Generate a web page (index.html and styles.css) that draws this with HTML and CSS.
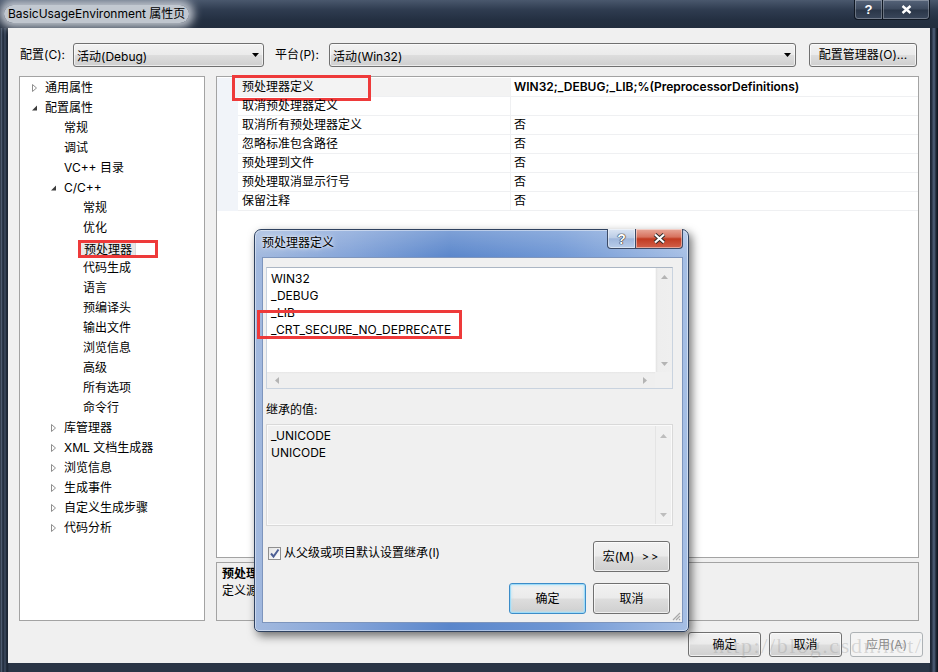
FILE: index.html
```html
<!DOCTYPE html>
<html lang="zh-CN">
<head>
<meta charset="utf-8">
<title>BasicUsageEnvironment 属性页</title>
<link rel="stylesheet" href="styles.css">
</head>
<body>
<div class="win">
  <div class="win-title">
    <span class="win-caption">BasicUsageEnvironment 属性页</span>
    <div class="win-btns">
      <span class="wbtn wbtn-help">?</span>
      <span class="wbtn wbtn-close"><svg width="11" height="9" viewBox="0 0 11 9"><path d="M1.5 1 L9.5 8 M9.5 1 L1.5 8" stroke="#fff" stroke-width="2.4" fill="none"/></svg></span>
    </div>
  </div>
  <div class="client">
    <div class="toprow">
      <span class="lbl lbl-cfg">配置(C):</span>
      <div class="combo combo-cfg"><span>活动(Debug)</span><svg class="drop" width="7" height="4" viewBox="0 0 7 4"><path d="M0 0H7L3.5 4Z" fill="#000"/></svg></div>
      <span class="lbl lbl-plat">平台(P):</span>
      <div class="combo combo-plat"><span>活动(Win32)</span><svg class="drop" width="7" height="4" viewBox="0 0 7 4"><path d="M0 0H7L3.5 4Z" fill="#000"/></svg></div>
      <div class="btn btn-mgr">配置管理器(O)...</div>
    </div>
    <div class="mainrow">
      <div class="tree">
        <div class="ti l0"><span class="tw"><svg width="7" height="10" viewBox="0 0 7 10"><path d="M1.5 1.5 L5.5 5 L1.5 8.5 Z" fill="#fff" stroke="#8e8e8e"/></svg></span>通用属性</div>
        <div class="ti l0"><span class="tw"><svg width="7" height="10" viewBox="0 0 7 10"><path d="M6 2.5 V7.5 H1 Z" fill="#3c3c3c"/></svg></span>配置属性</div>
        <div class="ti l1"><span class="tw"></span>常规</div>
        <div class="ti l1"><span class="tw"></span>调试</div>
        <div class="ti l1"><span class="tw"></span>VC++ 目录</div>
        <div class="ti l1"><span class="tw"><svg width="7" height="10" viewBox="0 0 7 10"><path d="M6 2.5 V7.5 H1 Z" fill="#3c3c3c"/></svg></span>C/C++</div>
        <div class="ti l2"><span class="tw"></span>常规</div>
        <div class="ti l2"><span class="tw"></span>优化</div>
        <div class="ti l2"><span class="tw"></span><span class="sel">预处理器<span class="redbox redbox-tree"></span></span></div>
        <div class="ti l2"><span class="tw"></span>代码生成</div>
        <div class="ti l2"><span class="tw"></span>语言</div>
        <div class="ti l2"><span class="tw"></span>预编译头</div>
        <div class="ti l2"><span class="tw"></span>输出文件</div>
        <div class="ti l2"><span class="tw"></span>浏览信息</div>
        <div class="ti l2"><span class="tw"></span>高级</div>
        <div class="ti l2"><span class="tw"></span>所有选项</div>
        <div class="ti l2"><span class="tw"></span>命令行</div>
        <div class="ti l1"><span class="tw"><svg width="7" height="10" viewBox="0 0 7 10"><path d="M1.5 1.5 L5.5 5 L1.5 8.5 Z" fill="#fff" stroke="#8e8e8e"/></svg></span>库管理器</div>
        <div class="ti l1"><span class="tw"><svg width="7" height="10" viewBox="0 0 7 10"><path d="M1.5 1.5 L5.5 5 L1.5 8.5 Z" fill="#fff" stroke="#8e8e8e"/></svg></span>XML 文档生成器</div>
        <div class="ti l1"><span class="tw"><svg width="7" height="10" viewBox="0 0 7 10"><path d="M1.5 1.5 L5.5 5 L1.5 8.5 Z" fill="#fff" stroke="#8e8e8e"/></svg></span>浏览信息</div>
        <div class="ti l1"><span class="tw"><svg width="7" height="10" viewBox="0 0 7 10"><path d="M1.5 1.5 L5.5 5 L1.5 8.5 Z" fill="#fff" stroke="#8e8e8e"/></svg></span>生成事件</div>
        <div class="ti l1"><span class="tw"><svg width="7" height="10" viewBox="0 0 7 10"><path d="M1.5 1.5 L5.5 5 L1.5 8.5 Z" fill="#fff" stroke="#8e8e8e"/></svg></span>自定义生成步骤</div>
        <div class="ti l1"><span class="tw"><svg width="7" height="10" viewBox="0 0 7 10"><path d="M1.5 1.5 L5.5 5 L1.5 8.5 Z" fill="#fff" stroke="#8e8e8e"/></svg></span>代码分析</div>
      </div>
      <div class="rightcol">
        <div class="grid">
          <div class="row row-sel"><div class="gut"></div><div class="name">预处理器定义<span class="redbox redbox-grid"></span></div><div class="val bold">WIN32;_DEBUG;_LIB;%(PreprocessorDefinitions)</div></div>
          <div class="row"><div class="gut"></div><div class="name">取消预处理器定义</div><div class="val"></div></div>
          <div class="row"><div class="gut"></div><div class="name">取消所有预处理器定义</div><div class="val">否</div></div>
          <div class="row"><div class="gut"></div><div class="name">忽略标准包含路径</div><div class="val">否</div></div>
          <div class="row"><div class="gut"></div><div class="name">预处理到文件</div><div class="val">否</div></div>
          <div class="row"><div class="gut"></div><div class="name">预处理取消显示行号</div><div class="val">否</div></div>
          <div class="row"><div class="gut"></div><div class="name">保留注释</div><div class="val">否</div></div>
        </div>
        <div class="desc">
          <div class="desc-title">预处理器定义</div>
          <div class="desc-text">定义源文件的预处理符号。</div>
        </div>
      </div>
    </div>
    <div class="btnrow">
      <div class="btn wbtn-ok">确定</div>
      <div class="btn wbtn-ok">取消</div>
      <div class="btn wbtn-ok disabled">应用(A)</div>
    </div>
  </div>
</div>

<div class="dlg">
  <div class="dlg-title">
    <span class="dlg-caption">预处理器定义</span>
    <div class="dlg-btns">
      <span class="dbtn dbtn-help">?</span>
      <span class="dbtn dbtn-close"><svg width="13" height="11" viewBox="0 0 13 11"><path d="M2 1.5 L11 9.5 M11 1.5 L2 9.5" stroke="#2b2b2b" stroke-width="4" fill="none"/><path d="M2 1.5 L11 9.5 M11 1.5 L2 9.5" stroke="#fff" stroke-width="2.2" fill="none"/></svg></span>
    </div>
  </div>
  <div class="dlg-client">
    <div class="edit">
      <div class="edit-text">
        <div>WIN32</div>
        <div>_DEBUG</div>
        <div>_LIB</div>
        <div class="crt">_CRT_SECURE_NO_DEPRECATE<span class="redbox redbox-crt"></span></div>
      </div>
      <div class="vscroll">
        <svg width="7" height="4" viewBox="0 0 7 4"><path d="M0 4L3.5 0L7 4Z" fill="#b4b4b4"/></svg>
        <svg width="7" height="4" viewBox="0 0 7 4"><path d="M0 0H7L3.5 4Z" fill="#b4b4b4"/></svg>
      </div>
      <div class="hscroll">
        <svg width="4" height="7" viewBox="0 0 4 7"><path d="M4 0V7L0 3.5Z" fill="#b4b4b4"/></svg>
        <svg width="4" height="7" viewBox="0 0 4 7"><path d="M0 0V7L4 3.5Z" fill="#b4b4b4"/></svg>
      </div>
      <div class="corner"></div>
    </div>
    <div class="inh-label">继承的值:</div>
    <div class="inh">
      <div class="inh-text">
        <div>_UNICODE</div>
        <div>UNICODE</div>
      </div>
      <div class="vscroll vscroll-dis">
        <svg width="7" height="4" viewBox="0 0 7 4"><path d="M0 4L3.5 0L7 4Z" fill="#bdbdbd"/></svg>
        <svg width="7" height="4" viewBox="0 0 7 4"><path d="M0 0H7L3.5 4Z" fill="#bdbdbd"/></svg>
      </div>
    </div>
    <div class="dlg-row1">
      <label class="chk"><span class="chkbox"><svg width="11" height="11" viewBox="0 0 11 11"><path d="M2 5.5 L4.5 8.5 L9.5 1.5" stroke="#4d5f95" stroke-width="2" fill="none"/></svg></span>从父级或项目默认设置继承(I)</label>
      <div class="btn dbtn-std">宏(M)&nbsp;<span class="gtgt">&gt;&gt;</span></div>
    </div>
    <div class="dlg-row2">
      <div class="btn dbtn-std focus">确定</div>
      <div class="btn dbtn-std">取消</div>
    </div>
    <span class="grip"><svg width="10" height="10" viewBox="0 0 10 10"><path d="M9 2 L2 9 M9 5 L5 9 M9 8 L8 9" stroke="#a8a8a8" stroke-width="1.2"/></svg></span>
  </div>
</div>

<div class="watermark">http://blog.csdn.net/</div>
</body>
</html>
```

FILE: styles.css
```css
* { box-sizing: border-box; }
html, body { margin: 0; padding: 0; }
body {
  width: 938px; height: 672px; overflow: hidden; position: relative;
  background: #1b2433;
  font-family: "Inter", "Noto Sans CJK SC", sans-serif;
  font-size: 12px; color: #000;
}

/* ---------- main window ---------- */
.win {
  width: 938px; height: 672px;
  display: flex; flex-direction: column;
  background: linear-gradient(90deg, #0c121b 0, #5d6c82 1px, #1c2636 3px, #3f4d62 5px, #17202d 7px, #2a3546 9px, #2a3546 calc(100% - 9px), #1a2332 calc(100% - 7px), #51607a calc(100% - 4px), #202a3a calc(100% - 2px), #0c121b 100%);
}
.win-title {
  height: 28px; flex: none;
  display: flex; align-items: flex-start;
  padding-left: 8px;
  background: linear-gradient(180deg, #4a586d 0%, #2f3c50 35%, #243042 70%, #222d3e 100%);
}
.win-caption {
  margin-top: 5px;
  padding: 0 4px;
  margin-left: -4px;
  line-height: 18px;
  color: #000;
  background: rgba(210, 215, 222, 0.9);
  border-radius: 9px;
  box-shadow: 0 0 8px 5px rgba(210, 215, 222, 0.85);
}
.win-btns { margin-left: auto; margin-right: 8px; display: flex; }
.wbtn {
  height: 20px; display: flex; align-items: center; justify-content: center;
  color: #fff; font-weight: bold; font-size: 13px; font-family: "Liberation Sans", sans-serif;
  border: 1px solid #0f1722; border-top: none;
  background: linear-gradient(180deg, #56647a 0%, #3c495d 48%, #2a3648 52%, #3a475b 100%);
  box-shadow: inset 0 0 0 1px rgba(255,255,255,0.28);
}
.wbtn-help { width: 29px; border-radius: 0 0 0 4px; }
.wbtn-close { width: 47px; border-radius: 0 0 4px 0; border-left: none; }

.client {
  flex: 1;
  margin: 0 8px 9px 8px;
  background: #f0f0f0;
  padding: 15px 11px 0 11px;
  display: flex; flex-direction: column;
}
.toprow { height: 24px; display: flex; align-items: center; flex: none; }
.lbl { line-height: 16px; }
.lbl-cfg { width: 54px; padding-left: 1px; }
.lbl-plat { width: 54px; margin-left: 11px; }
.combo {
  height: 24px; display: flex; align-items: center; justify-content: space-between;
  padding: 0 4px 0 3px;
  border: 1px solid #707070; border-radius: 3px;
  background: linear-gradient(180deg, #f2f2f2 0%, #ebebeb 48%, #dddddd 52%, #cfcfcf 100%);
  box-shadow: inset 0 0 0 1px rgba(255,255,255,0.6);
}
.combo-cfg { width: 191px; }
.combo-plat { width: 467px; }
.btn {
  display: flex; align-items: center; justify-content: center;
  border: 1px solid #707070; border-radius: 3px;
  background: linear-gradient(180deg, #f2f2f2 0%, #ebebeb 48%, #dddddd 52%, #cfcfcf 100%);
  box-shadow: inset 0 0 0 1px rgba(255,255,255,0.65);
  line-height: 16px; white-space: nowrap;
}
.btn-mgr { width: 108px; height: 24px; margin-left: 13px; }

.mainrow { height: 545px; margin-top: 9px; display: flex; gap: 11px; flex: none; }
.tree {
  width: 186px; height: 545px;
  background: #fff; border: 1px solid #a3a3a3;
  padding-top: 1px;
}
.ti { height: 20px; line-height: 20px; display: flex; align-items: center; white-space: nowrap; }
.ti.l0 { padding-left: 10px; }
.ti.l1 { padding-left: 29px; }
.ti.l2 { padding-left: 48px; }
.tw { width: 15px; flex: none; display: flex; align-items: center; padding-left: 1px; }
.tw svg { display: block; }
.sel {
  position: relative; display: inline-block;
  margin-left: -4px; padding: 0 3px 0 4px;
  line-height: 17px; height: 17px;
  background: #e8e8e8; border: 1px solid #dadada; border-radius: 2px;
}
.redbox { position: absolute; border: 3px solid #ee3a3a; pointer-events: none; }
.redbox-tree { left: -2px; top: -1px; width: 80px; height: 18px; }

.rightcol { width: 703px; display: flex; flex-direction: column; gap: 4px; }
.grid {
  height: 482px; background: #fff; border: 1px solid #a3a3a3;
  padding-top: 1px;
}
.row { display: grid; grid-template-columns: 21px 273px 1fr; height: 19px; }
.gut { background: #f1f4f9; }
.name {
  position: relative;
  padding-left: 4px; line-height: 18px;
  border-bottom: 1px solid #eff0f2; border-right: 1px solid #eff0f2;
  white-space: nowrap;
}
.row-sel .name { background: #f3f3f3; }
.val { padding-left: 3px; line-height: 18px; border-bottom: 1px solid #eff0f2; white-space: nowrap; }
.bold { font-weight: 600; }
.redbox-grid { left: -6px; top: -3px; width: 139px; height: 26px; }

.desc {
  height: 59px; border: 1px solid #a3a3a3; background: #f0f0f0;
  padding: 2px 0 0 5px;
}
.desc-title { font-weight: bold; line-height: 17px; }
.desc-text { line-height: 17px; }

.btnrow { display: flex; justify-content: flex-end; gap: 8px; margin-top: 11px; margin-right: -4px; flex: none; }
.wbtn-ok { width: 73px; height: 25px; }
.btn.disabled {
  color: #8a8a8a; border-color: #adb2b5;
  background: #f4f4f4; box-shadow: none;
}

/* ---------- dialog ---------- */
.dlg {
  position: absolute; left: 254px; top: 229px;
  width: 435px; height: 403px;
  border: 1px solid #2f4260; border-radius: 7px 7px 5px 5px;
  background:
    linear-gradient(180deg, rgba(255,255,255,0.22) 0, rgba(255,255,255,0) 28px),
    linear-gradient(90deg, #a2b9de 0%, #83a3d8 22%, #5a86cb 45%, #6e96d4 70%, #a6bfe5 100%);
  box-shadow: 3px 4px 10px rgba(0,0,0,0.55), inset 0 0 0 1px rgba(255,255,255,0.45);
  padding: 0 5px 8px 7px;
  display: flex; flex-direction: column;
}
.dlg-title { height: 27px; flex: none; display: flex; align-items: flex-start; }
.dlg-caption { margin-top: 5px; line-height: 16px; color: #000; text-shadow: 0 0 6px rgba(255,255,255,0.9), 0 0 3px rgba(255,255,255,0.9); }
.dlg-btns { margin-left: auto; margin-top: -1px; display: flex; }
.dbtn {
  height: 20px; display: flex; align-items: center; justify-content: center;
  border: 1px solid #3b4a66; border-top: none;
  box-shadow: inset 0 0 0 1px rgba(255,255,255,0.45);
}
.dbtn-help {
  width: 29px; border-radius: 0 0 0 4px;
  background: linear-gradient(180deg, #dbe5f3 0%, #bccde6 45%, #9fb7dc 52%, #b9cdea 100%);
  color: #fff; font-weight: bold; font-size: 14px; font-family: "Liberation Sans", sans-serif;
  text-shadow: 0 0 1px #222, 0 0 1px #222, 0 0 1px #222;
}
.dbtn-close {
  width: 47px; border-radius: 0 0 4px 0; border-left: none;
  background: linear-gradient(180deg, #e8a899 0%, #d7725e 42%, #c13b21 52%, #d2614a 100%);
}
.dlg-client {
  flex: 1; position: relative;
  background: #f0f0f0;
  border: 1px solid #7d95bd;
  padding: 9px 9px 0 3px;
  display: flex; flex-direction: column;
}
.edit {
  height: 122px; flex: none;
  border: 1px solid #c9d3df; border-top-color: #abb6c4;
  background: #fff;
  display: grid; grid-template-columns: 1fr 17px; grid-template-rows: 1fr 16px;
}
.edit-text { padding: 2px 0 0 4px; line-height: 17px; }
.crt { position: relative; display: inline-block; }
.redbox-crt { left: -14px; top: -11px; width: 205px; height: 29px; }
.vscroll {
  display: flex; flex-direction: column; align-items: center; justify-content: space-between;
  padding: 7px 0 6px;
  background: linear-gradient(90deg, #e3e3e3 0, #eeeeee 2px, #efefef 100%);
  border-left: 1px solid #f7f7f7;
}
.vscroll svg, .hscroll svg { display: block; }
.hscroll {
  display: flex; align-items: center; justify-content: space-between;
  padding: 0 8px 0 8px;
  background: linear-gradient(180deg, #e6e6e6 0, #efefef 2px, #efefef 100%);
}
.corner { background: #f0f0f0; }
.inh-label { margin-top: 13px; line-height: 16px; height: 16px; flex: none; }
.inh {
  margin-top: 6px; height: 102px; flex: none;
  border: 1px solid #d9d9d9; background: #f0f0f0;
  box-shadow: inset 0 0 0 1px #fafafa;
  display: grid; grid-template-columns: 1fr 17px;
}
.inh-text { padding: 2px 0 0 4px; line-height: 17px; }
.vscroll-dis { background: #f0f0f0; border-left: 1px solid #e4e4e4; margin: 1px 1px 1px 0; padding: 8px 0 7px; }

.dlg-row1 { margin-top: 15px; display: flex; align-items: flex-start; justify-content: space-between; flex: none; }
.chk { display: flex; align-items: center; margin-top: 4px; margin-left: 2px; line-height: 16px; gap: 3px; }
.chkbox {
  width: 13px; height: 13px; border: 1px solid #8f8f8f;
  background: linear-gradient(135deg, #e3e3e3 0%, #f4f4f4 60%, #fdfdfd 100%);
  display: flex; align-items: center; justify-content: center;
}
.chkbox svg { display: block; }
.dbtn-std { width: 77px; height: 31px; }
.dlg-row1 .dbtn-std { margin-right: 3px; }
.gtgt { letter-spacing: 2px; font-size: 11px; margin-left: 4px; }
.dlg-row2 { margin-top: 11px; display: flex; justify-content: flex-end; gap: 7px; margin-right: 3px; flex: none; }
.btn.focus {
  border-color: #3c8cc8;
  box-shadow: inset 0 0 0 1px #9fdcf8, inset 0 0 2px 2px rgba(180,230,250,0.5);
}
.grip { position: absolute; right: 1px; bottom: 1px; display: block; }
.grip svg { display: block; }

.watermark {
  position: absolute; left: 713px; top: 633px;
  font-family: "Liberation Serif", serif; font-size: 22px; letter-spacing: 1.6px;
  color: rgba(150, 150, 150, 0.32);
  pointer-events: none;
}
```
